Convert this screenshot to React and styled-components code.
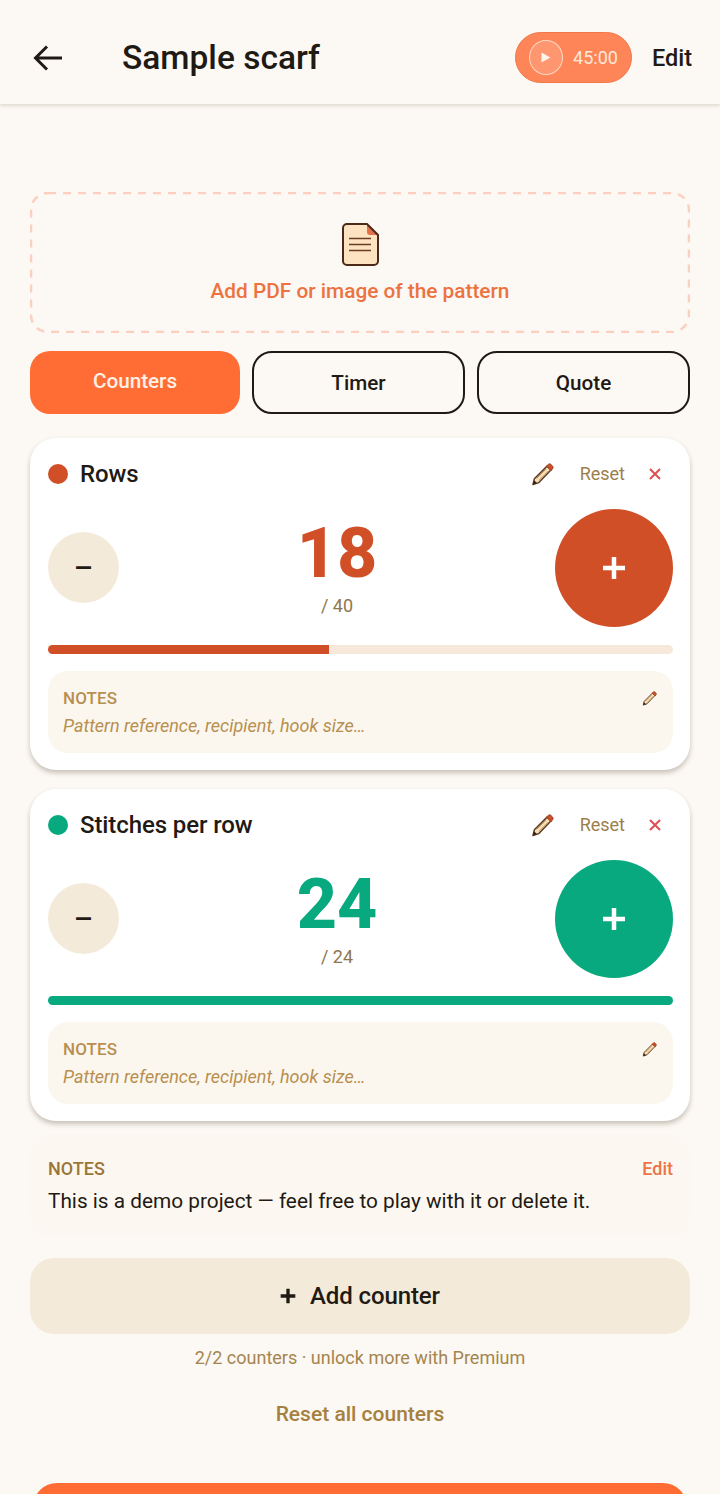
import React from 'react';
import styled, { createGlobalStyle } from 'styled-components';

const GlobalStyle = createGlobalStyle`
  html, body { margin: 0; padding: 0; background: #fcf8f3; }
  * { box-sizing: border-box; }
  body { font-family: Roboto, "Liberation Sans", sans-serif; }
`;

const Page = styled.div`
  width: 720px;
  height: 1494px;
  overflow: hidden;
  background: #fcf8f3;
  color: #1f1a14;
`;

const Header = styled.header`
  height: 104px;
  padding: 11px 28px 0 33px;
  display: flex;
  align-items: center;
  background: #fcf8f3;
  box-shadow: 0 2px 3px rgba(90, 70, 50, 0.16);
`;

const Title = styled.h1`
  margin: 0 0 0 59px;
  flex: 1;
  font-size: 33.500px;
  font-weight: 500;
  line-height: 40px;
`;

const TimerPill = styled.div`
  width: 117px;
  height: 51px;
  margin-right: 20px;
  padding: 0 13px;
  display: flex;
  align-items: center;
  gap: 10px;
  border-radius: 26px;
  background: #fe8557;
  border: 1px solid #f2784a;
  color: #ffe9dc;
  font-size: 18px;
`;

const PlayRing = styled.div`
  width: 35px;
  height: 35px;
  display: flex;
  align-items: center;
  justify-content: center;
  border-radius: 50%;
  background: #fe9670;
  border: 1.5px solid #ffd9c6;
`;

const HeaderEdit = styled.span`
  font-size: 23.500px;
  font-weight: 500;
`;

const Main = styled.main`
  padding: 88px 30px 0;
`;

const Upload = styled.div`
  position: relative;
  height: 141px;
  padding-top: 31px;
  display: flex;
  flex-direction: column;
  align-items: center;
  gap: 13px;
  color: #ec7340;
  font-size: 20.800px;
  font-weight: 500;
`;

const DashedEdge = styled.svg`
  position: absolute;
  inset: 0;
  width: 100%;
  height: 100%;
`;

const Tabs = styled.div`
  margin-top: 18px;
  display: grid;
  grid-template-columns: 210px 1fr 1fr;
  gap: 12px;
`;

const Tab = styled.div`
  height: 63px;
  padding-bottom: ${p => (p.$active ? '4px' : '0')};
  display: flex;
  align-items: center;
  justify-content: center;
  border-radius: 20px;
  font-size: 20.700px;
  font-weight: 500;
  background: ${p => (p.$active ? '#ff6d35' : 'transparent')};
  color: ${p => (p.$active ? '#fff1e6' : '#1f1a14')};
  border: ${p => (p.$active ? 'none' : '2px solid #1f1a14')};
`;

const Card = styled.section`
  height: 332px;
  margin-top: ${p => p.$first ? '24px' : '19px'};
  padding: 18px 17px 17px 18px;
  background: #fff;
  border-radius: 26px;
  box-shadow: 0 3px 5px rgba(80, 65, 45, 0.3);
`;

const CardHead = styled.div`
  height: 36px;
  display: flex;
  align-items: center;
`;

const Dot = styled.span`
  width: 20px;
  height: 20px;
  margin-right: 12px;
  border-radius: 50%;
  background: ${p => p.$color};
`;

const CardTitle = styled.span`
  flex: 1;
  font-size: 24px;
  font-weight: 500;
  letter-spacing: -0.1px;
`;

const ResetLink = styled.span`
  margin: -2px 24px 0 26px;
  font-size: 18px;
  color: #9c7f4d;
`;

const Close = styled.svg`
  width: 12px;
  height: 12px;
  margin-right: 12px;
`;

const CounterRow = styled.div`
  height: 118px;
  margin-top: 17px;
  display: flex;
  align-items: center;
`;

const Minus = styled.div`
  width: 71px;
  height: 71px;
  margin-top: -2px;
  display: flex;
  align-items: center;
  justify-content: center;
  border-radius: 50%;
  background: #f4ead9;
  font-size: 30px;
  font-weight: 500;
`;

const Count = styled.div`
  flex: 1;
  display: flex;
  flex-direction: column;
  align-items: center;
  margin-top: -8px;
`;

const Value = styled.div`
  font-size: 70px;
  font-weight: 800;
  line-height: 84px;
  color: ${p => p.$color};
`;

const Goal = styled.div`
  font-size: 18px;
  line-height: 22px;
  color: #8f7650;
`;

const Plus = styled.div`
  width: 118px;
  height: 118px;
  display: flex;
  align-items: center;
  justify-content: center;
  border-radius: 50%;
  background: ${p => p.$color};
`;

const Track = styled.div`
  height: 9px;
  margin-top: 18px;
  overflow: hidden;
  border-radius: 5px;
  background: #f6e8da;
`;

const Fill = styled.div`
  height: 100%;
  background: ${p => p.$color};
`;

const NoteBox = styled.div`
  height: 82px;
  margin-top: 17px;
  padding: 16px 15px;
  background: #fbf7ee;
  border-radius: 20px;
`;

const NoteHead = styled.div`
  display: flex;
  align-items: center;
  justify-content: space-between;
  padding-right: 1px;
  font-size: 17px;
  line-height: 22px;
  font-weight: 500;
  letter-spacing: 0.1px;
  color: #b88f50;
`;

const NoteHint = styled.div`
  margin-top: 6px;
  font-size: 18px;
  line-height: 22px;
  font-style: italic;
  color: #b88f50;
`;

const ProjectNotes = styled.div`
  height: 103px;
  margin-top: 13px;
  padding: 23px 17px 0 18px;
  background: #fcf8f1;
  border-radius: 20px;
`;

const ProjectHead = styled.div`
  display: flex;
  justify-content: space-between;
  font-size: 18px;
  line-height: 24px;
  font-weight: 500;
  color: #9c7538;
`;

const ProjectEdit = styled.span`
  color: #ed7444;
`;

const ProjectText = styled.p`
  margin: 8px 0 0;
  font-size: 20.800px;
  line-height: 24px;
`;

const AddButton = styled.div`
  height: 76px;
  margin-top: 21px;
  display: flex;
  align-items: center;
  justify-content: center;
  gap: 14px;
  background: #f4ead9;
  border-radius: 24px;
  font-size: 24px;
  font-weight: 500;
  letter-spacing: -0.1px;
`;

const LimitText = styled.div`
  margin-top: 13px;
  text-align: center;
  font-size: 18px;
  line-height: 22px;
  color: #a5854f;
`;

const ResetAll = styled.div`
  margin-top: 33px;
  text-align: center;
  font-size: 21px;
  line-height: 24px;
  font-weight: 500;
  color: #a5803f;
`;

const BottomButton = styled.div`
  height: 76px;
  margin: 57px 3px 0;
  background: #ff6d35;
  border-radius: 24px;
`;

const ArrowIcon = () => (
  <svg width="30" height="30" viewBox="0 0 30 30" fill="none" stroke="#1f1a14" strokeWidth="3">
    <path d="M29 15H3M14 3.5 2.5 15 14 26.5" />
  </svg>
);

const PlayIcon = () => (
  <svg width="11" height="11" viewBox="0 0 11 11"><path d="M1.5 .5 10.5 5.5 1.5 10.500Z" fill="#fff3ea" /></svg>
);

const DocIcon = () => (
  <svg width="37" height="43" viewBox="0 0 37 43">
    <path d="M5 1H25L36 12V38a4 4 0 0 1-4 4H5a4 4 0 0 1-4-4V5a4 4 0 0 1 4-4Z" fill="#fde3c2" />
    <path d="M25 1 36 12H28a3 3 0 0 1-3-3Z" fill="#e2704a" />
    <path d="M5 1H25L36 12V38a4 4 0 0 1-4 4H5a4 4 0 0 1-4-4V5a4 4 0 0 1 4-4Z" fill="none" stroke="#4a2a18" strokeWidth="2" />
    <path d="M7 15.500H29M7 21.500H29M7 27.500H29" stroke="#6b3d20" strokeWidth="1.500" />
  </svg>
);

// small cartoon pencil, used at two sizes
const PencilIcon = ({ size }) => (
  <svg width={size} height={size} viewBox="0 0 24 24">
    <path d="M17 3 21 7 8 20.500 2 22.500 3.500 16.500Z" fill="#f7dfb8" stroke="#5a3a20" strokeWidth="1.500" strokeLinejoin="round" />
    <path d="M16 3.500 18 1.500a2 2 0 0 1 2.800 0l1.700 1.700a2 2 0 0 1 0 2.800L21 8Z" fill="#c9502c" stroke="#a03c1c" strokeWidth="1" />
    <path d="M15.500 6.500 6 16M18 8.500 8.500 18" stroke="#b98a50" strokeWidth="1" />
    <path d="M3.200 18 2 22.500 6.500 21Z" fill="#3a2515" />
  </svg>
);

const CloseIcon = () => (
  <Close viewBox="0 0 12 12" fill="none" stroke="#de4f52" strokeWidth="2">
    <path d="M1 1 11 11M11 1 1 11" />
  </Close>
);

const PlusIcon = ({ size, stroke, color }) => (
  <svg width={size} height={size} viewBox="0 0 24 24" fill="none" stroke={color} strokeWidth={stroke}>
    <path d="M12 1V23M1 12H23" />
  </svg>
);

const CounterCard = ({ first, name, value, goal, color }) => (
  <Card $first={first}>
    <CardHead>
      <Dot $color={color} />
      <CardTitle>{name}</CardTitle>
      <PencilIcon size={23} />
      <ResetLink>Reset</ResetLink>
      <CloseIcon />
    </CardHead>
    <CounterRow>
      <Minus>–</Minus>
      <Count>
        <Value $color={color}>{value}</Value>
        <Goal>/ {goal}</Goal>
      </Count>
      <Plus $color={color}><PlusIcon size={24} stroke={4.500} color="#fff" /></Plus>
    </CounterRow>
    <Track><Fill $color={color} style={{ width: `${(value / goal) * 100}%` }} /></Track>
    <NoteBox>
      <NoteHead>NOTES <PencilIcon size={15} /></NoteHead>
      <NoteHint>Pattern reference, recipient, hook size…</NoteHint>
    </NoteBox>
  </Card>
);

export default function App() {
  return (
    <Page>
      <GlobalStyle />
      <Header>
        <ArrowIcon />
        <Title>Sample scarf</Title>
        <TimerPill>
          <PlayRing><PlayIcon /></PlayRing>
          45:00
        </TimerPill>
        <HeaderEdit>Edit</HeaderEdit>
      </Header>
      <Main>
        <Upload>
          <DashedEdge viewBox="0 0 660 141" fill="none">
            <rect x="1" y="1" width="658" height="139" rx="17" stroke="#fbd0c0" strokeWidth="2.500" strokeDasharray="8 7" />
          </DashedEdge>
          <DocIcon />
          Add PDF or image of the pattern
        </Upload>
        <Tabs>
          <Tab $active>Counters</Tab>
          <Tab>Timer</Tab>
          <Tab>Quote</Tab>
        </Tabs>
        <CounterCard first name="Rows" value={18} goal={40} color="#d14f27" />
        <CounterCard name="Stitches per row" value={24} goal={24} color="#08a97e" />
        <ProjectNotes>
          <ProjectHead>NOTES <ProjectEdit>Edit</ProjectEdit></ProjectHead>
          <ProjectText>This is a demo project — feel free to play with it or delete it.</ProjectText>
        </ProjectNotes>
        <AddButton><PlusIcon size={16} stroke={5} color="#1f1a14" />Add counter</AddButton>
        <LimitText>2/2 counters · unlock more with Premium</LimitText>
        <ResetAll>Reset all counters</ResetAll>
        <BottomButton />
      </Main>
    </Page>
  );
}
